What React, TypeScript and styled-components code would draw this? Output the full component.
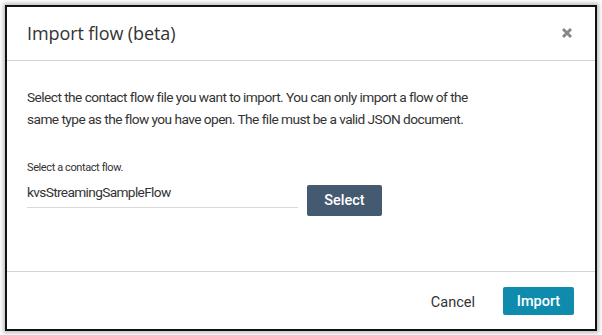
import React from "react";
import styled, { createGlobalStyle } from "styled-components";

const Global = createGlobalStyle`
  html, body { margin: 0; padding: 0; background: #ffffff; }
  body { font-family: Roboto, "Noto Sans", sans-serif; }
  * { box-sizing: border-box; }
`;

const Page = styled.div`
  width: 602px;
  height: 335px;
  padding: 5px 5px 4px 5px;
`;

const Modal = styled.div`
  width: 592px;
  height: 326px;
  border: 2px solid #111;
  background: #fff;
  box-shadow: 0 0 4px 2px rgba(0, 0, 0, 0.25);
  display: flex;
  flex-direction: column;
`;

const Header = styled.div`
  height: 54px;
  flex: none;
  display: flex;
  align-items: center;
  justify-content: space-between;
  padding: 0 22px 2px 20px;
  border-bottom: 1px solid #d5d5d5;
`;

const Title = styled.h2`
  margin: 0;
  font-family: "Open Sans", sans-serif;
  font-size: 18px;
  font-weight: 400;
  color: #333;
  letter-spacing: -0.1px;
`;

const Close = styled.button`
  border: 0;
  background: none;
  padding: 0;
  width: 12px;
  height: 12px;
  display: flex;
  cursor: pointer;
`;

const Body = styled.div`
  flex: 1;
  padding: 25px 20px 0 20px;
  border-bottom: 1px solid #d5d5d5;
`;

const Description = styled.p`
  margin: 0 0 31px 0;
  max-width: 472px;
  font-size: 13.7px;
  line-height: 22px;
  color: #333;
  letter-spacing: -0.55px;
`;

const Label = styled.div`
  font-size: 11px;
  color: #333;
  margin-bottom: 7px;
  letter-spacing: -0.4px;
`;

const Row = styled.div`
  display: flex;
  align-items: flex-start;
  gap: 9px;
`;

const FileInput = styled.div`
  width: 271px;
  height: 27px;
  border-bottom: 1px solid #d9d9d9;
  font-size: 13.7px;
  color: #333;
  line-height: 22px;
  letter-spacing: -0.65px;
`;

const Button = styled.button<{ $variant: "dark" | "primary" | "link" }>`
  border: 0;
  border-radius: 2px;
  font-family: inherit;
  font-size: 14.5px;
  font-weight: 500;
  padding: 0;
  cursor: pointer;
  color: ${(p) => (p.$variant === "link" ? "#333" : "#fff")};
  background: ${(p) =>
    p.$variant === "dark" ? "#445a70" : p.$variant === "primary" ? "#0f8cad" : "transparent"};
`;

const SelectButton = styled(Button)`
  width: 75px;
  height: 31px;
  margin-top: 4px;
`;

const Footer = styled.div`
  height: 57px;
  flex: none;
  display: flex;
  align-items: center;
  justify-content: flex-end;
  padding: 0 21px 0 0;
  gap: 28px;
`;

const ImportButton = styled(Button)`
  width: 71px;
  height: 28px;
  margin-top: 1px;
`;

const CancelButton = styled(Button)`
  height: 28px;
  margin-top: 4px;
  font-weight: 400;
`;

export default function App() {
  return (
    <>
      <Global />
      <Page>
        <Modal>
          <Header>
            <Title>Import flow (beta)</Title>
            <Close aria-label="Close">
              <svg width="12" height="12" viewBox="0 0 12 12">
                <path d="M2 2 L10 10 M10 2 L2 10" stroke="#888" strokeWidth="3" strokeLinecap="butt" />
              </svg>
            </Close>
          </Header>
          <Body>
            <Description>
              Select the contact flow file you want to import. You can only import a flow of the
              same type as the flow you have open. The file must be a valid JSON document.
            </Description>
            <Label>Select a contact flow.</Label>
            <Row>
              <FileInput>kvsStreamingSampleFlow</FileInput>
              <SelectButton $variant="dark">Select</SelectButton>
            </Row>
          </Body>
          <Footer>
            <CancelButton $variant="link">Cancel</CancelButton>
            <ImportButton $variant="primary">Import</ImportButton>
          </Footer>
        </Modal>
      </Page>
    </>
  );
}
